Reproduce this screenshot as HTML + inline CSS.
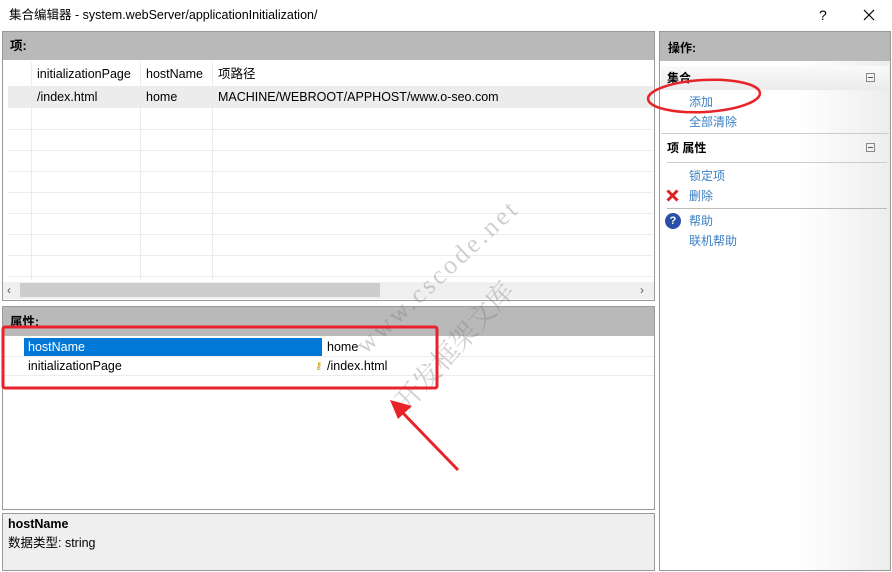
<!DOCTYPE html>
<html><head><meta charset="utf-8"><style>
*{margin:0;padding:0;box-sizing:border-box}
body{width:892px;height:572px;background:#fff;position:relative;overflow:hidden;font-family:"Liberation Sans","Noto Sans CJK SC",sans-serif;font-size:12.5px;line-height:15px;color:#000}
.a{position:absolute;white-space:nowrap}
.hl{position:absolute;height:1px;background:#ececec}
.vl{position:absolute;width:1px;background:#ececec}
.lk{color:#3a7fc4;position:absolute;left:689px;font-size:12px}
</style></head><body>
<div class="a" style="left:0;top:0;width:892px;height:31px;background:#fff"></div>
<div class="a" style="left:9px;top:8px;font-size:12.5px">集合编辑器 - system.webServer/applicationInitialization/</div>
<div class="a" style="left:819px;top:8px;font-size:14px">?</div>
<svg class="a" style="left:863px;top:9px" width="12" height="12"><path d="M1 1L11 11M11 1L1 11" stroke="#000" stroke-width="1.2"/></svg>

<!-- left items panel -->
<div class="a" style="left:2px;top:31px;width:653px;height:270px;border:1px solid #999;background:#fff"></div>
<div class="a" style="left:3px;top:32px;width:651px;height:28px;background:#b9b9b9"></div>
<div class="a" style="left:10px;top:39px;font-weight:bold">项:</div>
<div class="a" style="left:8px;top:87px;width:645px;height:21px;background:#ececec"></div>
<div class="vl" style="left:31px;top:62px;height:218px"></div>
<div class="vl" style="left:140px;top:62px;height:218px"></div>
<div class="vl" style="left:212px;top:62px;height:218px"></div>
<div class="hl" style="left:8px;top:86px;width:645px"></div>
<div class="hl" style="left:8px;top:129px;width:645px"></div>
<div class="hl" style="left:8px;top:150px;width:645px"></div>
<div class="hl" style="left:8px;top:171px;width:645px"></div>
<div class="hl" style="left:8px;top:192px;width:645px"></div>
<div class="hl" style="left:8px;top:213px;width:645px"></div>
<div class="hl" style="left:8px;top:234px;width:645px"></div>
<div class="hl" style="left:8px;top:255px;width:645px"></div>
<div class="hl" style="left:8px;top:276px;width:645px"></div>
<div class="a" style="left:37px;top:67px">initializationPage</div>
<div class="a" style="left:146px;top:67px">hostName</div>
<div class="a" style="left:218px;top:67px">项路径</div>
<div class="a" style="left:37px;top:90px">/index.html</div>
<div class="a" style="left:146px;top:90px">home</div>
<div class="a" style="left:218px;top:90px">MACHINE/WEBROOT/APPHOST/www.o-seo.com</div>
<div class="a" style="left:3px;top:282px;width:651px;height:17px;background:#f0f0f0"></div>
<div class="a" style="left:20px;top:283px;width:360px;height:14px;background:#cdcdcd"></div>
<div class="a" style="left:7px;top:283px;color:#555;font-size:12px">‹</div>
<div class="a" style="left:640px;top:283px;color:#555;font-size:12px">›</div>

<!-- properties -->
<div class="a" style="left:2px;top:306px;width:653px;height:204px;border:1px solid #999;background:#fff"></div>
<div class="a" style="left:3px;top:307px;width:651px;height:29px;background:#b9b9b9"></div>
<div class="a" style="left:10px;top:315px;font-weight:bold">属性:</div>
<div class="a" style="left:24px;top:338px;width:298px;height:18px;background:#0078d7"></div>
<div class="a" style="left:28px;top:340px;color:#fff">hostName</div>
<div class="a" style="left:327px;top:340px">home</div>
<div class="hl" style="left:4px;top:356px;width:650px"></div>
<div class="hl" style="left:4px;top:375px;width:650px"></div>
<div class="a" style="left:28px;top:359px">initializationPage</div>
<div class="a" style="left:315px;top:359px;color:#c90;font-size:10px">⚷</div>
<div class="a" style="left:327px;top:359px">/index.html</div>

<!-- description -->
<div class="a" style="left:2px;top:513px;width:653px;height:58px;border:1px solid #999;background:#efefef"></div>
<div class="a" style="left:8px;top:517px;font-weight:bold">hostName</div>
<div class="a" style="left:8px;top:536px">数据类型: string</div>

<!-- right panel -->
<div class="a" style="left:659px;top:31px;width:232px;height:540px;border:1px solid #999;background:linear-gradient(90deg,#fff 60%,#ededed)"></div>
<div class="a" style="left:660px;top:32px;width:230px;height:29px;background:#b9b9b9"></div>
<div class="a" style="left:668px;top:41px;font-weight:bold;font-size:12px">操作:</div>
<div class="a" style="left:661px;top:66px;width:228px;height:24px;background:linear-gradient(#fafafa,#ebebeb)"></div>
<div class="a" style="left:667px;top:71px;font-weight:bold;font-size:12px">集合</div>
<div class="a" style="left:866px;top:73px;width:9px;height:9px;border:1px solid #888"><div style="position:absolute;left:1px;top:3px;width:5px;height:1px;background:#555"></div></div>
<div class="lk" style="top:95px">添加</div>
<div class="lk" style="top:115px">全部清除</div>
<div class="a" style="left:661px;top:133px;width:228px;height:1px;background:#ccc"></div>
<div class="a" style="left:667px;top:141px;font-weight:bold;font-size:12px">项 属性</div>
<div class="a" style="left:866px;top:143px;width:9px;height:9px;border:1px solid #888"><div style="position:absolute;left:1px;top:3px;width:5px;height:1px;background:#555"></div></div>
<div class="a" style="left:667px;top:162px;width:220px;height:1px;background:#ccc"></div>
<div class="lk" style="top:169px">锁定项</div>
<svg class="a" style="left:666px;top:189px" width="13" height="13"><path d="M1.5 1.5L11.5 11.5M11.5 1.5L1.5 11.5" stroke="#d22" stroke-width="3"/></svg>
<div class="lk" style="top:189px">删除</div>
<div class="a" style="left:667px;top:208px;width:220px;height:1px;background:#bbb"></div>
<div class="a" style="left:665px;top:213px;width:16px;height:16px;border-radius:50%;background:#2a4fa8;color:#fff;font-size:11px;font-weight:bold;text-align:center;line-height:16px">?</div>
<div class="lk" style="top:214px">帮助</div>
<div class="lk" style="top:234px">联机帮助</div>

<!-- watermark -->
<div class="a" style="left:350px;top:338px;transform:rotate(-43deg);transform-origin:left top;color:rgba(120,120,120,0.35);font-family:'Liberation Serif','Noto Serif CJK SC',serif;font-size:26px;letter-spacing:3px;line-height:30px">www.cscode.net</div>
<div class="a" style="left:388px;top:395px;transform:rotate(-48deg);transform-origin:left top;color:rgba(120,120,120,0.35);font-family:'Noto Serif CJK SC',serif;font-size:27px;line-height:30px">开发框架文库</div>

<!-- annotations -->
<svg class="a" style="left:0;top:0" width="892" height="572">
<rect x="3" y="327" width="434" height="61" rx="2" fill="none" stroke="#e8232a" stroke-width="3"/>
<ellipse cx="704" cy="96" rx="56" ry="16" fill="none" stroke="#e8232a" stroke-width="2.5" transform="rotate(-3 704 96)"/>
<line x1="458" y1="470" x2="400" y2="410" stroke="#e8232a" stroke-width="3"/>
<polygon points="390,400 412,406 398,419" fill="#e8232a"/>
</svg>
</body></html>
